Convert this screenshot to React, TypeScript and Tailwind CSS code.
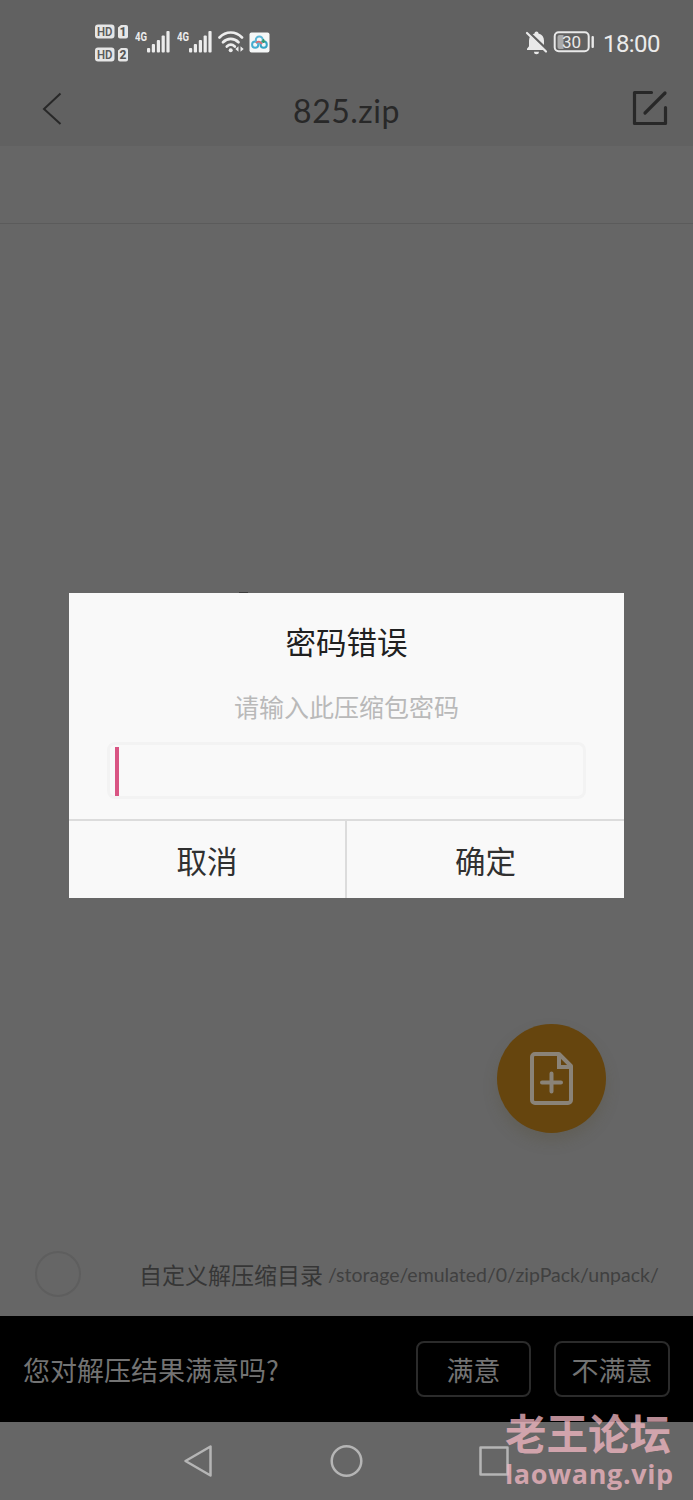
import React, { useState } from 'react';

function SimSignal() {
  return (
    <svg width="36" height="24" viewBox="0 0 36 24" fill="#ececec">
      <text x="0" y="10.5" fontFamily="Roboto, sans-serif" fontSize="12.500" fontWeight="700" textLength="12" lengthAdjust="spacingAndGlyphs">
        4G
      </text>
      <rect x="12" y="18" width="3.200" height="4.5" rx="1" />
      <rect x="16.8" y="14" width="3.200" height="8.5" rx="1" />
      <rect x="21.8" y="10" width="3.200" height="12.5" rx="1" />
      <rect x="26.6" y="5.5" width="3.200" height="17" rx="1" />
      <rect x="31.4" y="1" width="3.200" height="21.5" rx="1" />
    </svg>
  );
}

function HdBadge({ sim }: { sim: string }) {
  return (
    <svg width="34" height="15" viewBox="0 0 34 15">
      <rect x="0" y="0.5" width="19.5" height="14" rx="3" fill="#e6e6e6" />
      <path d="M23 3.5 26 1h5a2 2 0 0 1 2 2v9.500a2 2 0 0 1-2 2h-6a2 2 0 0 1-2-2z" fill="#e6e6e6" />
      <text x="2" y="12" fontFamily="Roboto, sans-serif" fontSize="13" fontWeight="600" fill="#5c5c5c" textLength="15.500" lengthAdjust="spacingAndGlyphs">
        HD
      </text>
      <text x="28" y="12" textAnchor="middle" fontFamily="Roboto, sans-serif" fontSize="12" fontWeight="800" fill="#555">
        {sim}
      </text>
    </svg>
  );
}

function StatusBar() {
  return (
    <div className="flex h-[84px] items-center justify-between pl-[95px] pr-[33px]">
      <div className="flex items-center">
        <div className="flex w-10 flex-col gap-2 pt-0.5">
          <HdBadge sim="1" />
          <HdBadge sim="2" />
        </div>
        <div className="flex gap-[6px]">
          <SimSignal />
          <SimSignal />
        </div>
        <svg className="ml-[5px]" width="26" height="24" viewBox="0 0 26 24" fill="none" stroke="#ececec" strokeWidth="2.700" strokeLinecap="round">
          <path d="M1.500 7.500C8 .8 17.500 .8 24 7.500" />
          <path d="M5 12.200c4.500-4.500 11-4.500 15.500 0" />
          <path d="M8.800 16.500c2.500-2.300 5.500-2.300 8 0" />
          <circle cx="12.700" cy="20.300" r="2" fill="#ececec" stroke="none" />
          <path d="m17.300 19 3.200-2.700v5.400zM25.700 19l-3.200-2.700v5.400z" fill="#ececec" stroke="none" />
        </svg>
        <svg className="ml-[5px]" width="21" height="21" viewBox="0 0 21 21" fill="none">
          <rect x="0.500" y="0.500" width="20" height="20" rx="2" fill="#f5f7f7" />
          <circle cx="6.200" cy="12.700" r="3.100" stroke="#45acd0" strokeWidth="2" />
          <circle cx="14.700" cy="12.700" r="3.100" stroke="#35a4c4" strokeWidth="2" />
          <circle cx="10.300" cy="8" r="3.500" stroke="#5bb5d5" strokeWidth="2" />
          <path d="M7 11c2-2.500 4-1.500 6 .8" stroke="#dd6c70" strokeWidth="1.800" />
          <path d="M14.500 7v4M12.800 9.200h3.500" stroke="#369a69" strokeWidth="1.500" />
        </svg>
      </div>

      <div className="flex items-center">
        <svg className="mt-0.5" width="23" height="24" viewBox="0 0 23 24">
          <path d="M9.500 2.500a2 2 0 0 1 4 0c3.600.9 5.500 3.700 5.500 7.200v5.500l2 2.600v1.200H2v-1.200l2-2.600V9.700c0-3.500 1.900-6.300 5.500-7.200z" fill="#e9e9e9" />
          <path d="M9 20.800h5a2.500 2.500 0 0 1-5 0z" fill="#e9e9e9" />
          <path d="M2.500 0 23 19.500" stroke="#616161" strokeWidth="2.500" />
          <path d="M2 2 21 20.500" stroke="#e9e9e9" strokeWidth="2.200" strokeLinecap="round" />
        </svg>
        <svg className="ml-[5px]" width="42" height="22" viewBox="0 0 42 22">
          <rect x="1.700" y="1.200" width="34" height="19" rx="4" fill="none" stroke="#e9e9e9" strokeWidth="2" />
          <path d="M6.500 4h4v14h-4a2 2 0 0 1-2-2V6a2 2 0 0 1 2-2z" fill="#aaa" />
          <rect x="38.500" y="5" width="2.400" height="12" rx="1" fill="#e9e9e9" />
          <text x="18.500" y="17" textAnchor="middle" fontFamily="Roboto, sans-serif" fontSize="17" fill="#e9e9e9">
            30
          </text>
        </svg>
        <span className="ml-[8px] w-[57px] pt-[3px] font-[Roboto,sans-serif] text-[24px] leading-6 tracking-[-0.6px] text-[#ebebeb]">
          18:00
        </span>
      </div>
    </div>
  );
}

function Header() {
  return (
    <header className="h-[146px] bg-[#616161]">
      <StatusBar />
      <div className="flex h-[50px] items-center justify-between pl-[42px] pr-[24px] text-[#282828]">
        <button className="w-[38px]" aria-label="返回">
          <svg width="20" height="34" viewBox="0 0 20 34" fill="none" stroke="currentColor" strokeWidth="2">
            <path d="M18.500 1.500 2 17l16.500 15" />
          </svg>
        </button>
        <h1 className="mr-[18px] pt-1 font-[Lato,sans-serif] text-[32px] leading-none tracking-[0.5px]">825.zip</h1>
        <button aria-label="编辑">
          <svg className="-mt-0.5" width="38" height="38" viewBox="0 0 38 38" fill="none" stroke="currentColor" strokeWidth="3.200" strokeLinejoin="round" strokeLinecap="round">
            <path d="M20.500 3.500H3.500v31h31V18.500" />
            <path d="M34 4 14 24" />
          </svg>
        </button>
      </div>
    </header>
  );
}

function AddFileButton() {
  return (
    <button className="flex size-[109px] items-center justify-center rounded-full bg-[#66450e] shadow-[0_8px_14px_rgba(85,80,55,0.3)]" aria-label="添加文件">
      <svg width="46" height="56" viewBox="0 0 46 56" fill="none" stroke="#8a8378" strokeWidth="4" strokeLinejoin="round" strokeLinecap="round">
        <path d="M30 3H6a3 3 0 0 0-3 3v43a3 3 0 0 0 3 3h33a3 3 0 0 0 3-3V15z" />
        <path d="M30 4v12h11" strokeLinejoin="miter" />
        <path d="M22.500 22.500v18M13 31.500h19" />
      </svg>
    </button>
  );
}

function PasswordDialog() {
  const [password, setPassword] = useState('');

  return (
    <div className="absolute left-[69px] top-[593px] flex h-[305px] w-[555px] flex-col bg-[#f9f9f9]">
      <div className="flex flex-1 flex-col items-center">
        <h2 className="mt-[28px] text-[30.5px] leading-10 text-[#202020]">密码错误</h2>
        <p className="mt-[29px] text-[25px] leading-8 text-[#b9b9b9]">请输入此压缩包密码</p>
        <div className="mt-[20px] flex h-[57px] w-[479px] items-center rounded-lg border-[3px] border-[#f3f3f3] pl-[5px] pt-px">
          <span className="h-[49px] w-1 bg-[#d95583]" />
          <input
            type="password"
            value={password}
            onChange={(e) => setPassword(e.target.value)}
            className="h-full flex-1 bg-transparent outline-none"
          />
        </div>
      </div>
      <div className="flex h-[79px] border-t-2 border-[#dcdcdc] text-[30.5px] text-[#303030]">
        <button className="w-[278px] border-r-2 border-[#dcdcdc] pt-0.5">取消</button>
        <button className="flex-1 pt-0.5">确定</button>
      </div>
    </div>
  );
}

export default function App() {
  return (
    <div className="relative flex h-[1500px] w-[693px] flex-col overflow-hidden bg-[#666] font-['Noto_Sans_CJK_SC',sans-serif]">
      <Header />
      <div className="h-[78px] border-b border-[#5b5b5b]" />

      <main className="flex flex-1 items-end justify-end pb-[99px] pr-[87px]">
        <AddFileButton />
      </main>

      <div className="flex h-[84px] items-center pl-[35px]">
        <span className="size-[46px] rounded-full border-2 border-[#5e5e5e]" />
        <span className="ml-[58px] text-[23px] text-[#363636]">自定义解压缩目录</span>
        <span className="ml-[5px] whitespace-nowrap pt-px font-[Lato,sans-serif] text-[19.5px] text-[#404040]">
          /storage/emulated/0/zipPack/unpack/
        </span>
      </div>

      <div className="flex h-[106px] items-center bg-black pl-[23px] pr-[23px] text-[27px] text-[#737373]">
        <span className="flex-1 pt-[3px]">您对解压结果满意吗?</span>
        <button className="h-14 w-[115px] rounded-lg border-2 border-[#2b2b2b] pt-[3px]">满意</button>
        <button className="ml-[23px] h-14 w-[116px] rounded-lg border-2 border-[#2b2b2b] pt-[3px]">不满意</button>
      </div>

      <nav className="flex h-[78px] items-center pl-[183px]">
        <svg width="330" height="34" viewBox="0 0 330 34" fill="none" stroke="#b5b5b5" strokeWidth="2.500" strokeLinejoin="round">
          <path d="M27.500 2.500v29L2.500 17z" />
          <circle cx="163.500" cy="17" r="14.800" />
          <rect x="297.500" y="3.500" width="27" height="27" />
        </svg>
      </nav>

      {/* top edge of the spinner behind the dialog */}
      <span className="absolute left-[239px] top-[592px] h-px w-[9px] bg-[#3d3d3d]" />
      <PasswordDialog />

      <div className="absolute left-[505px] top-[1411px] flex flex-col whitespace-nowrap font-bold text-[rgb(245,185,196)]/75">
        <span className="text-[41.5px] leading-[42px]">老王论坛</span>
        <span className="font-['Open_Sans',sans-serif] text-[27px] leading-[42px] tracking-[0.6px]">laowang.vip</span>
      </div>
    </div>
  );
}
